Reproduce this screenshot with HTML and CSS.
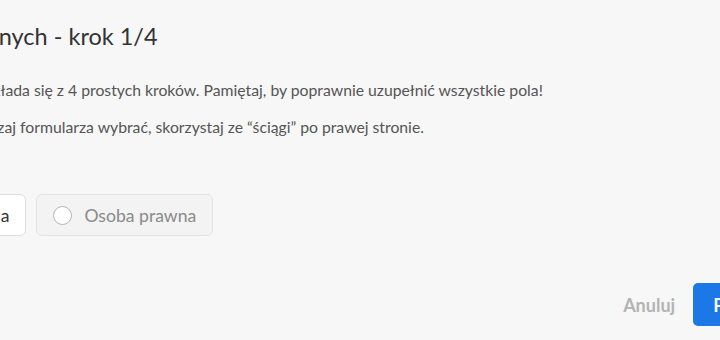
FILE: index.html
```html
<!DOCTYPE html>
<html>
<head>
  <title>Rejestracja - krok 1/4</title>
  <link rel="stylesheet" href="styles.css">
</head>
<body>
  <div class="modal">
    <h2 class="modal-title">Aktualizowanie danych - krok 1/4</h2>
    <p class="modal-text">Proces rejestracji konta składa się z 4 prostych kroków. Pamiętaj, by poprawnie uzupełnić wszystkie pola!</p>
    <p class="modal-text">Jeżeli nie wiesz, który rodzaj formularza wybrać, skorzystaj ze “ściągi” po prawej stronie.</p>

    <div class="radio-group">
      <label class="radio-option selected">
        <span class="radio-circle"></span>
        <span>Osoba fizyczna</span>
      </label>
      <label class="radio-option">
        <span class="radio-circle"></span>
        <span>Osoba prawna</span>
      </label>
    </div>

    <div class="modal-footer">
      <button class="btn-cancel">Anuluj</button>
      <button class="btn-primary">Przejdź dalej</button>
    </div>
  </div>
</body>
</html>
```

FILE: styles.css
```css
body {
  margin: 0;
  padding: 0;
  background-color: #f7f7f7;
  font-family: Lato, "Open Sans", sans-serif;
  overflow: hidden;
}

.modal {
  margin-left: -178px;
  width: 1012px;
  padding-top: 21px;
}

.modal-title {
  margin: 0 0 28px -11px;
  font-size: 23.5px;
  line-height: 30px;
  font-weight: 400;
  color: #333;
}

.modal-text {
  margin: 0 0 15px;
  font-size: 15.75px;
  line-height: 22px;
  color: #555;
}

.radio-group {
  display: flex;
  gap: 10px;
  margin: 56px 0 0 23px;
}

.radio-option {
  display: flex;
  align-items: center;
  gap: 12px;
  height: 40px;
  padding: 0 16px;
  border: 1px solid #e3e3e3;
  border-radius: 6px;
  background-color: #f3f3f3;
  font-size: 17.6px;
  color: #8a8a8a;
}

.radio-option.selected {
  background-color: #fff;
  border-color: #dedede;
  color: #333;
}

.radio-circle {
  width: 17px;
  height: 17px;
  border: 1px solid #b5b5b5;
  border-radius: 50%;
  background-color: #fff;
}

.modal-footer {
  display: flex;
  justify-content: flex-end;
  align-items: center;
  gap: 18px;
  margin-top: 47px;
}

.btn-cancel {
  border: none;
  background: none;
  padding: 0;
  font-family: inherit;
  font-size: 18px;
  font-weight: 700;
  color: #b3b3b3;
  cursor: pointer;
}

.btn-primary {
  height: 43px;
  padding: 0 20px;
  border: none;
  border-radius: 5px;
  background-color: #1c78e6;
  font-family: inherit;
  font-size: 18px;
  font-weight: 700;
  color: #fff;
  cursor: pointer;
}
```
